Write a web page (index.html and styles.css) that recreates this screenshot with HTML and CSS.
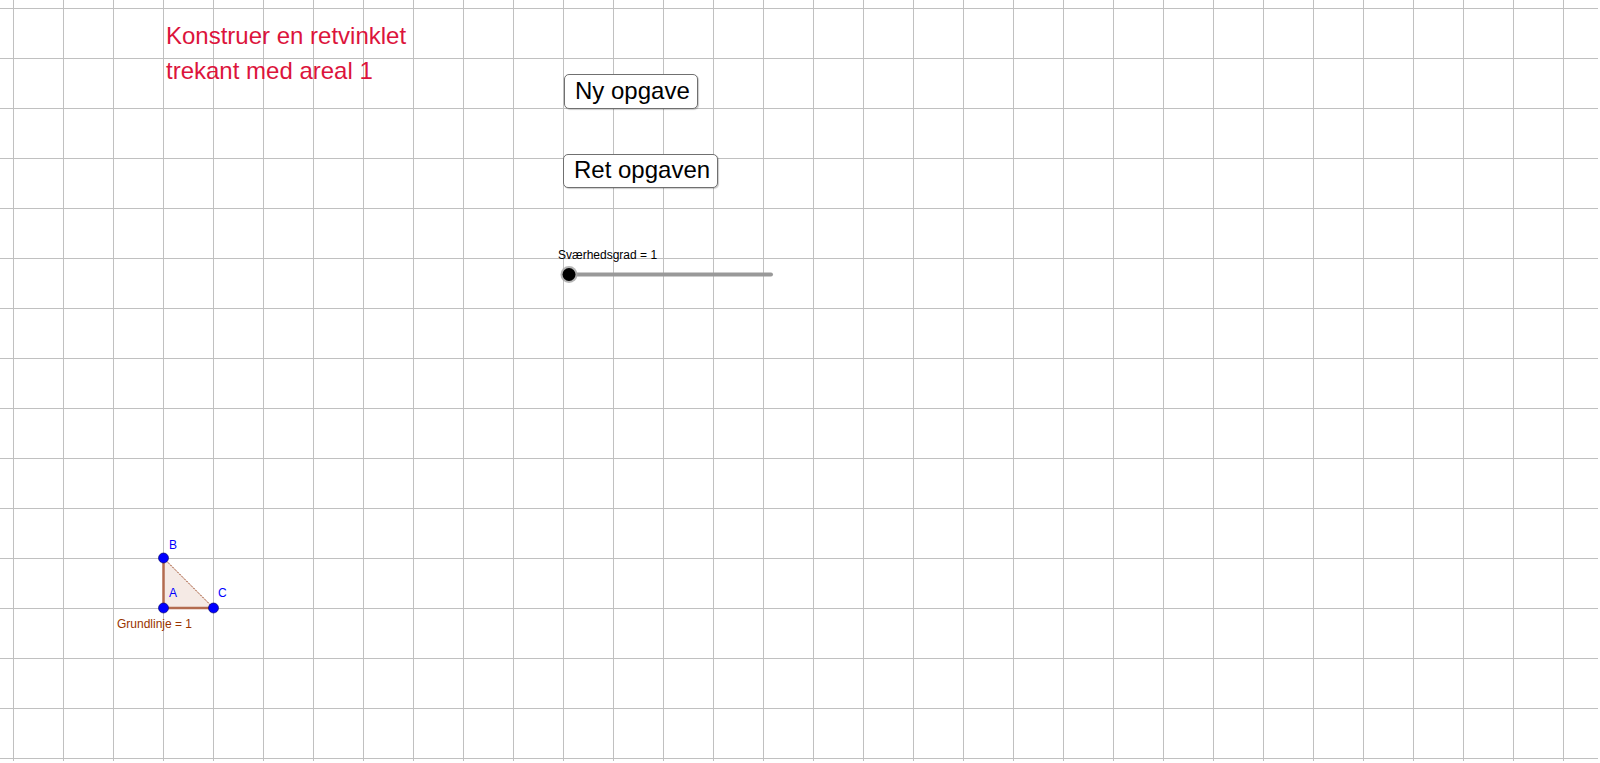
FILE: index.html
```html
<!DOCTYPE html>
<html>
<head>
<meta charset="utf-8">
<link rel="stylesheet" href="styles.css">
</head>
<body>
<div class="canvas">
  <div class="title">Konstruer en retvinklet<br>trekant med areal 1</div>
  <button class="btn btn-new">Ny opgave</button>
  <button class="btn btn-check">Ret opgaven</button>
  <div class="slider-label">Sværhedsgrad = 1</div>
  <svg class="shapes" width="1598" height="761" viewBox="0 0 1598 761">
    <line x1="569" y1="274.5" x2="771" y2="274.5" stroke="#999999" stroke-width="4" stroke-linecap="round"/>
    <circle cx="569" cy="274.5" r="8.5" fill="#a8a8a8" opacity="0.85"/>
    <circle cx="569" cy="274.5" r="6.5" fill="#000000"/>
    <polygon points="163.5,558 163.5,608 213.5,608" fill="#993300" fill-opacity="0.1" stroke="none"/>
    <line x1="163.5" y1="558" x2="163.5" y2="608" stroke="#b36b4f" stroke-width="2.5"/>
    <line x1="163.5" y1="608" x2="213.5" y2="608" stroke="#b36b4f" stroke-width="2.5"/>
    <line x1="163.5" y1="558" x2="213.5" y2="608" stroke="#8a2a00" stroke-width="1" stroke-dasharray="1.5 1"/>
    <circle cx="163.5" cy="558" r="5" fill="#0000ff" stroke="#000055" stroke-width="0.6"/>
    <circle cx="163.5" cy="608" r="5" fill="#0000ff" stroke="#000055" stroke-width="0.6"/>
    <circle cx="213.5" cy="608" r="5" fill="#0000ff" stroke="#000055" stroke-width="0.6"/>
  </svg>
  <div class="pt-label lbl-b">B</div>
  <div class="pt-label lbl-a">A</div>
  <div class="pt-label lbl-c">C</div>
  <div class="base-label">Grundlinje = 1</div>
</div>
</body>
</html>
```

FILE: styles.css
```css
html, body {
  margin: 0;
  padding: 0;
  background: #ffffff;
  font-family: "Liberation Sans", Arial, sans-serif;
}

.canvas {
  position: relative;
  width: 1598px;
  height: 761px;
  overflow: hidden;
  background-color: #ffffff;
  background-image:
    linear-gradient(to right, #c0c0c0 1px, transparent 1px),
    linear-gradient(to bottom, #c0c0c0 1px, transparent 1px);
  background-size: 50px 50px;
  background-position: 13px 8px;
}

.shapes {
  position: absolute;
  left: 0;
  top: 0;
}

.title {
  position: absolute;
  left: 166px;
  top: 18px;
  font-size: 24px;
  line-height: 35px;
  color: #dc143c;
  white-space: nowrap;
}

.btn {
  position: absolute;
  margin: 0;
  font-family: "Liberation Sans", Arial, sans-serif;
  font-size: 24px;
  line-height: 27px;
  color: #000000;
  background: #ffffff;
  border: 1px solid #707070;
  border-radius: 5px;
  box-shadow: 1px 1px 1px rgba(0, 0, 0, 0.2);
  padding: 2px 10px 4px 11px;
  white-space: nowrap;
  text-align: left;
}

.btn-new {
  left: 564px;
  top: 74px;
  width: 134px;
  height: 35px;
  padding-left: 10px;
}

.btn-check {
  left: 563px;
  top: 154px;
  width: 155px;
  height: 34px;
  padding: 1px 8px 4px 10px;
}

.slider-label {
  position: absolute;
  left: 558px;
  top: 248px;
  font-size: 12px;
  line-height: 14px;
  color: #000000;
  white-space: nowrap;
}

.pt-label {
  position: absolute;
  font-size: 12px;
  line-height: 14px;
  color: #0000ff;
}

.lbl-b { left: 169px; top: 538px; }
.lbl-a { left: 169px; top: 586px; }
.lbl-c { left: 218px; top: 586px; }

.base-label {
  position: absolute;
  left: 117px;
  top: 617px;
  font-size: 12px;
  line-height: 14px;
  color: #993300;
  white-space: nowrap;
}
```
